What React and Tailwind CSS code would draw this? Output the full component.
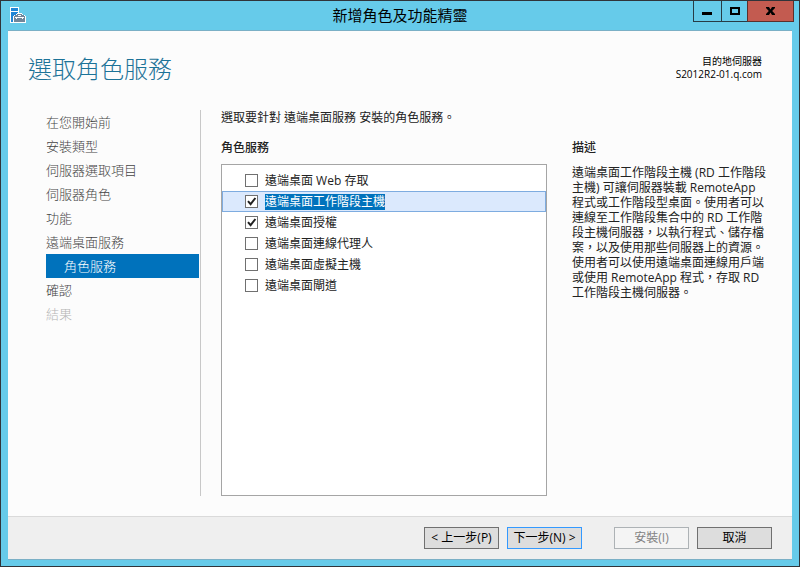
import { useState } from "react";

const steps = [
  { label: "在您開始前" },
  { label: "安裝類型" },
  { label: "伺服器選取項目" },
  { label: "伺服器角色" },
  { label: "功能" },
  { label: "遠端桌面服務" },
  { label: "角色服務", current: true },
  { label: "確認" },
  { label: "結果", disabled: true },
];

const roleServices = [
  { id: "web-access", label: "遠端桌面 Web 存取" },
  { id: "session-host", label: "遠端桌面工作階段主機" },
  { id: "licensing", label: "遠端桌面授權" },
  { id: "broker", label: "遠端桌面連線代理人" },
  { id: "virtualization", label: "遠端桌面虛擬主機" },
  { id: "gateway", label: "遠端桌面閘道" },
];

const description = `遠端桌面工作階段主機 (RD 工作階段
主機) 可讓伺服器裝載 RemoteApp
程式或工作階段型桌面。使用者可以
連線至工作階段集合中的 RD 工作階
段主機伺服器，以執行程式、儲存檔
案，以及使用那些伺服器上的資源。
使用者可以使用遠端桌面連線用戶端
或使用 RemoteApp 程式，存取 RD
工作階段主機伺服器。`;

function ServerManagerIcon() {
  return (
    <svg className="h-4 w-4" viewBox="0 0 16 16" aria-hidden="true" shapeRendering="crispEdges">
      <path d="M0 0h9v16H0z" fill="#fff" />
      <path d="M1 1h7v3H1zM1 5h7v10H1z" fill="#1f86d6" />
      {/* toolbox */}
      <path d="M7 6h5v1h1v1h2v1h1v7H3V9h1V8h2V7h1z" fill="#fff" />
      <path d="M7 7h5v1h2v1h1v6H4V9h1V8h2z" fill="#71879b" />
      <path d="M8 8h3v1H8zM5 10h9v1H5zM6 11h1v1H6zM12 11h1v1h-1z" fill="#fff" />
    </svg>
  );
}

function TitleBar() {
  return (
    <header className="grid h-[29px] grid-cols-[1fr_auto_1fr] items-start px-[5px]">
      <div className="pt-1.5 pl-1">
        <ServerManagerIcon />
      </div>
      <h1 className="text-[15px] leading-7 text-black">新增角色及功能精靈</h1>
      <div className="flex h-[21px] justify-end">
        <button
          type="button"
          aria-label="最小化"
          className="flex w-[28px] items-center justify-center border-b border-l border-[#273c46]"
        >
          <svg className="h-3 w-3" viewBox="0 0 12 12" aria-hidden="true">
            <path d="M0 7h10v3H0z" />
          </svg>
        </button>
        <button
          type="button"
          aria-label="最大化"
          className="flex w-[26px] items-center justify-center border-b border-l border-[#273c46]"
        >
          <svg className="h-3 w-3" viewBox="0 0 12 12" aria-hidden="true">
            <path d="M1 2h10v8H1zM3 4v4h6V4z" fillRule="evenodd" />
          </svg>
        </button>
        <button
          type="button"
          aria-label="關閉"
          className="flex w-[47px] items-center justify-center border-x border-b border-[#5b302c] bg-[#c35b50]"
        >
          <svg className="h-3 w-3" viewBox="0 0 12 12" aria-hidden="true">
            <path d="M1 2h3l1.5 2.5L7 2h3v1L7.2 6 10 9v1H7L5.5 7.5 4 10H1V9l2.8-3L1 3z" />
          </svg>
        </button>
      </div>
    </header>
  );
}

function StepList() {
  return (
    <nav className="w-[155px] border-r border-[#c8c8c8] pr-px text-[13px] font-light">
      <ul>
        {steps.map((step) => (
          <li key={step.label}>
            {step.disabled ? (
              <span className="block h-6 leading-6 text-[#b4b4b4]">{step.label}</span>
            ) : (
              <a
                href="#"
                aria-current={step.current ? "step" : undefined}
                className={
                  step.current
                    ? "block h-6 bg-[#0072bc] pl-[18px] leading-6 text-white"
                    : "block h-6 leading-6 text-[#444]"
                }
              >
                {step.label}
              </a>
            )}
          </li>
        ))}
      </ul>
    </nav>
  );
}

function RoleRow({ service, checked, selected, onToggle }) {
  return (
    <li
      className={
        selected
          ? "flex h-[21px] items-center border border-[#7eace0] bg-[#dbe9fd] pl-[22px]"
          : "flex h-[21px] items-center border border-transparent pl-[22px]"
      }
    >
      <span className="grid h-[13px] w-[13px]">
        <input
          id={service.id}
          type="checkbox"
          checked={checked}
          onChange={() => onToggle(service.id)}
          className="col-start-1 row-start-1 h-[13px] w-[13px] appearance-none border border-[#707070] bg-white"
        />
        {checked && (
          <svg
            className="pointer-events-none col-start-1 row-start-1 h-[13px] w-[13px]"
            viewBox="0 0 13 13"
            fill="none"
            stroke="#212121"
            strokeWidth="2"
            aria-hidden="true"
          >
            <path d="M3 6.2l2.6 3L10.4 3" />
          </svg>
        )}
      </span>
      <label
        htmlFor={service.id}
        className={selected ? "ml-[7px] bg-[#0072bc] leading-4 text-white" : "ml-[7px] leading-4"}
      >
        {service.label}
      </label>
    </li>
  );
}

export default function App() {
  const [checkedIds, setCheckedIds] = useState(["session-host", "licensing"]);

  const toggle = (id) => {
    setCheckedIds(
      checkedIds.includes(id) ? checkedIds.filter((item) => item !== id) : [...checkedIds, id]
    );
  };

  return (
    <div
      lang="zh-TW"
      className="flex min-h-screen flex-col border border-[#30343a] bg-[#66cbea] font-['Open_Sans','Noto_Sans_CJK_TC',sans-serif] text-xs text-[#222]"
    >
      <TitleBar />

      <div className="mx-[7px] mb-1.5 flex flex-1 flex-col border-y border-[#7bb0c6] bg-[#fcfcfc]">
        <div className="flex h-[79px] items-start justify-between pr-[30px] pl-5">
          <h2 className="pt-5 text-2xl leading-9 font-light text-[#1c7398]">選取角色服務</h2>
          <div className="pt-6 text-right text-[10px] leading-[13px] text-black">
            <p>目的地伺服器</p>
            <p>S2012R2-01.q.com</p>
          </div>
        </div>

        <main className="flex flex-1 pr-6 pb-5 pl-[38px]">
          <StepList />

          <section className="ml-5 flex flex-1 flex-col">
            <p className="leading-4">選取要針對 遠端桌面服務 安裝的角色服務。</p>
            <h3 className="mt-3.5 leading-4 font-medium">角色服務</h3>
            <ul className="mt-2 flex-1 border border-[#a5a5a5] bg-white pt-[5px]">
              {roleServices.map((service) => (
                <RoleRow
                  key={service.id}
                  service={service}
                  checked={checkedIds.includes(service.id)}
                  selected={service.id === "session-host"}
                  onToggle={toggle}
                />
              ))}
            </ul>
          </section>

          <aside className="ml-[25px] w-[196px] pt-[30px]">
            <h3 className="leading-4 font-medium">描述</h3>
            <p className="mt-[9px] leading-[15px] whitespace-pre-line">{description}</p>
          </aside>
        </main>

        <footer className="flex justify-end gap-2 border-t border-[#dadada] bg-[#efefef] px-5 py-2.5 text-black">
          <button type="button" className="h-[22px] w-[75px] border border-[#707070] bg-[#dddddd]">
            &lt; 上一步(P)
          </button>
          <button type="button" className="h-[22px] w-[75px] border border-[#3399ff] bg-[#dddddd]">
            下一步(N) &gt;
          </button>
          <button
            type="button"
            disabled
            className="ml-6 h-[22px] w-[75px] border border-[#adb2b5] bg-[#f4f4f4] text-[#838383]"
          >
            安裝(I)
          </button>
          <button type="button" className="h-[22px] w-[75px] border border-[#707070] bg-[#dddddd]">
            取消
          </button>
        </footer>
      </div>
    </div>
  );
}
